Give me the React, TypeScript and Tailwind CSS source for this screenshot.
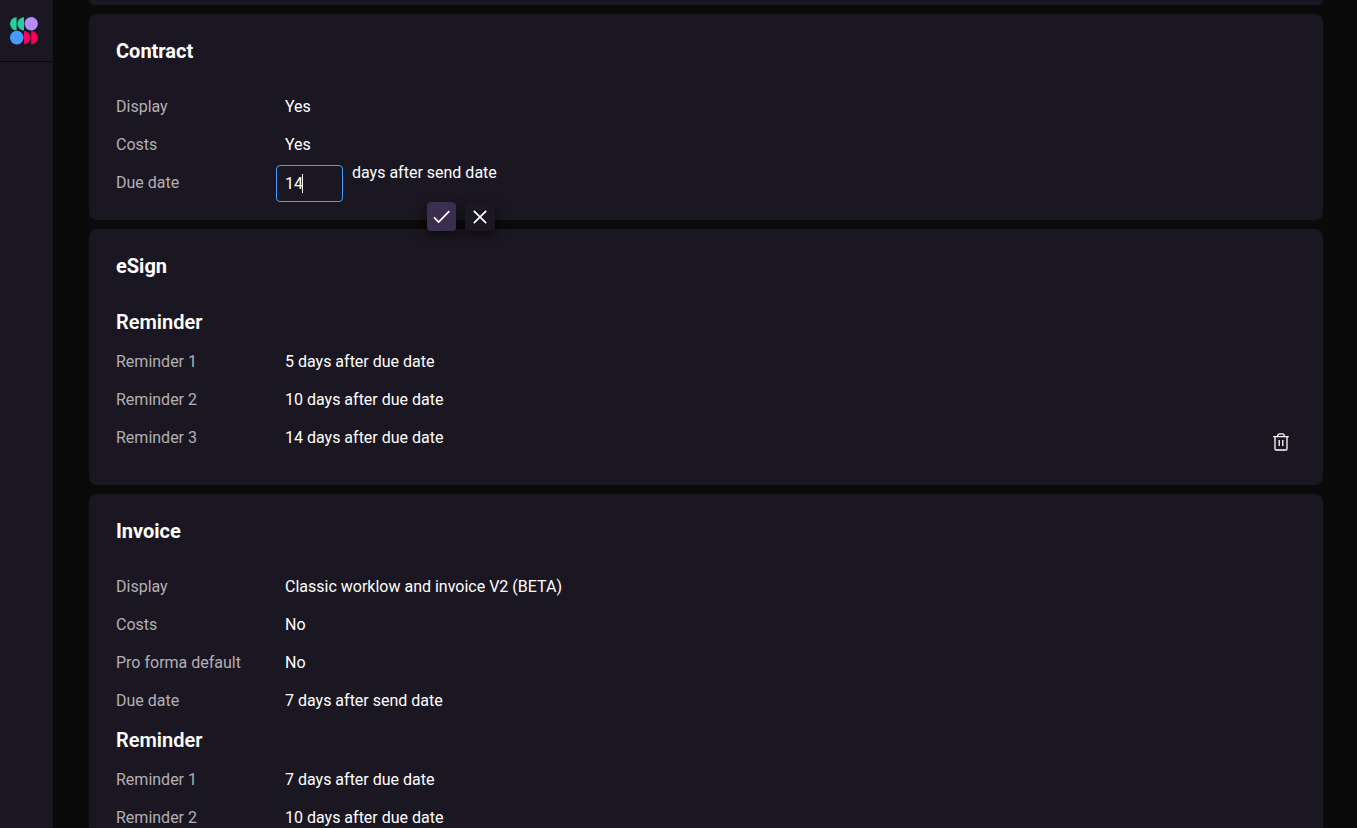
import type { ReactNode } from "react";

function Logo() {
  return (
    <svg width="28" height="28" viewBox="0 0 28 28" aria-label="Home">
      <path d="M6.6 0.2v13.2a6.6 6.6 0 0 1 0-13.2z" fill="#27cfa0" />
      <path d="M14 0.2v13.2a6.6 6.6 0 0 1 0-13.2z" fill="#27cfa0" />
      <circle cx="21.2" cy="6.8" r="6.7" fill="#b48cf8" />
      <circle cx="6.8" cy="20.6" r="6.8" fill="#459dfb" />
      <path d="M14 14v13.2a6.6 6.6 0 0 0 0-13.2z" fill="#ff0058" />
      <path d="M21.2 14v13.2a6.6 6.6 0 0 0 0-13.2z" fill="#ff0058" />
    </svg>
  );
}

function Card({ title, className = "", children }: { title: string; className?: string; children: ReactNode }) {
  return (
    <section className={`rounded-lg bg-[#1b1722] px-[27px] pt-[25px] ${className}`}>
      <h2 className="mb-6 text-xl leading-6 font-bold">{title}</h2>
      {children}
    </section>
  );
}

function Rows({ children }: { children: ReactNode }) {
  return <dl className="pt-px">{children}</dl>;
}

function Row({ label, children }: { label: ReactNode; children: ReactNode }) {
  return (
    <div className="flex h-[38px] items-center">
      <dt className="w-[160px] shrink-0 text-[#b1b0b4]">{label}</dt>
      <dd className="flex-1 pl-[9px]">{children}</dd>
    </div>
  );
}

function Subheading() {
  return <h3 className="py-2 text-xl leading-6 font-semibold">Reminder</h3>;
}

function DueDateEditor() {
  return (
    <form className="relative -ml-[9px] flex w-fit gap-[9px] pt-px" onSubmit={(e) => e.preventDefault()}>
      <span className="relative">
        <input
          id="due-date"
          type="text"
          defaultValue="14"
          className="block h-[37px] w-[67px] rounded border border-[#459dfb] bg-transparent px-2 caret-transparent outline-none"
        />
        <span className="absolute top-[9px] left-[26px] h-[19px] w-px bg-white" />
      </span>
      <span className="leading-4">days after send date</span>
      <div className="absolute top-full right-0.5 z-10 flex gap-[9px]">
        <button
          type="submit"
          aria-label="Save"
          className="flex size-[29px] items-center justify-center rounded bg-[#3b2f50] shadow-[0_4px_12px_rgba(0,0,0,0.6)]"
        >
          <svg width="19" height="19" viewBox="0 0 19 19" fill="none" stroke="white" strokeWidth="1.7">
            <path d="M2 10.3l4.7 4.7L17.3 4.2" />
          </svg>
        </button>
        <button
          type="button"
          aria-label="Cancel"
          className="flex h-[29px] w-[30px] items-center justify-center rounded bg-[#1b1722] shadow-[0_4px_12px_rgba(0,0,0,0.6)]"
        >
          <svg width="14" height="14" viewBox="0 0 14 14" fill="none" stroke="white" strokeWidth="1.7">
            <path d="M0.8 0.8l12.4 12.4M13.2 0.8L0.8 13.2" />
          </svg>
        </button>
      </div>
    </form>
  );
}

export default function App() {
  return (
    <div className="flex h-screen overflow-hidden bg-[#0a0a0a] font-['Roboto',sans-serif] text-base text-white">
      <nav className="w-[53px] shrink-0 bg-[#1b1722]">
        <a href="#" className="flex h-[62px] items-center border-b border-[#08080a] pl-[10px]">
          <Logo />
        </a>
      </nav>
      <main className="flex min-w-0 flex-1 flex-col gap-[9px] overflow-hidden pr-[34px] pl-9 *:shrink-0">
        <div className="h-[5px] rounded-b-lg bg-[#1b1722]" />

        <Card title="Contract" className="pb-[18px]">
          <Rows>
            <Row label="Display">Yes</Row>
            <Row label="Costs">Yes</Row>
            <Row label={<label htmlFor="due-date">Due date</label>}>
              <DueDateEditor />
            </Row>
          </Rows>
        </Card>

        <Card title="eSign" className="pb-7">
          <Subheading />
          <Rows>
            <Row label="Reminder 1">5 days after due date</Row>
            <Row label="Reminder 2">10 days after due date</Row>
            <Row label="Reminder 3">
              <div className="flex items-center justify-between">
                <span>14 days after due date</span>
                <button type="button" aria-label="Delete reminder" className="mr-[7px] pt-2">
                  <svg width="16" height="18" viewBox="0 0 16 18" fill="none" stroke="white" strokeWidth="1.3">
                    <path d="M0.2 3.6h15.6M2 3.6v12.2q0 1.2 1.2 1.2h9.6q1.2 0 1.2-1.2V3.6M4.4 3.4C4.8 1.6 5.4 0.8 6.6 0.8h2.8c1.2 0 1.8 0.8 2.2 2.6M6.2 7v6M9.8 7v6" />
                  </svg>
                </button>
              </div>
            </Row>
          </Rows>
        </Card>

        <Card title="Invoice" className="pb-7">
          <Rows>
            <Row label="Display">Classic worklow and invoice V2 (BETA)</Row>
            <Row label="Costs">No</Row>
            <Row label="Pro forma default">No</Row>
            <Row label="Due date">7 days after send date</Row>
          </Rows>
          <Subheading />
          <Rows>
            <Row label="Reminder 1">7 days after due date</Row>
            <Row label="Reminder 2">10 days after due date</Row>
          </Rows>
        </Card>
      </main>
    </div>
  );
}
